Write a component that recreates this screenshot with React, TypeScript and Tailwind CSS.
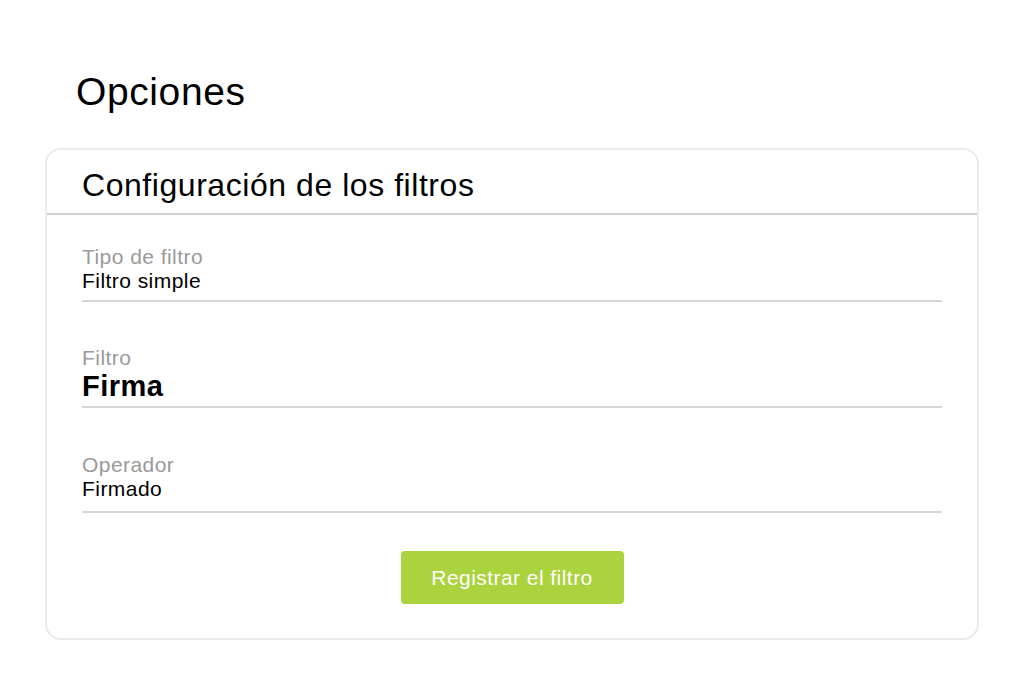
import React from "react";

const fields = [
  { label: "Tipo de filtro", value: "Filtro simple", strong: false, gap: "", pad: "pb-[7px]" },
  { label: "Filtro", value: "Firma", strong: true, gap: "mt-[44px]", pad: "pb-[4px]" },
  { label: "Operador", value: "Firmado", strong: false, gap: "mt-[45px]", pad: "pb-[10px]" },
];

const App = () => {
  return (
    <div className="w-[1024px] h-[683px] bg-white px-[45px] pt-[66px] font-['Liberation_Sans',Arial,sans-serif] text-black">
      {/* page title */}
      <h1 className="pl-[31px] text-[39px] leading-[52px] tracking-[0.6px]">Opciones</h1>

      {/* card */}
      <div className="mt-[30px] rounded-[16px] border-2 border-[#ebebeb]">
        <div className="h-[65px] px-[35px] flex items-center border-b-2 border-[#d2d2d2]">
          <h2 className="text-[32px] leading-[36px] pt-[6px] tracking-[0.55px]">Configuración de los filtros</h2>
        </div>

        <div className="px-[35px] pt-[30px] pb-[34px]">
          {fields.map((f) => (
            <div key={f.label} className={`border-b-2 border-[#d6d6d6] ${f.gap} ${f.pad}`}>
              <div className="text-[21px] leading-[24px] tracking-[0.45px] text-[#9a9a9a]">{f.label}</div>
              {f.strong ? (
                <div className="text-[29px] leading-[32px] font-bold tracking-[0.5px]">{f.value}</div>
              ) : (
                <div className="text-[21px] leading-[24px] tracking-[0.45px]">{f.value}</div>
              )}
            </div>
          ))}

          <div className="mt-[38px] flex justify-center">
            <button className="w-[223px] h-[53px] rounded-[4px] bg-[#aad33e] text-white text-[21px] tracking-[0.45px]">
              Registrar el filtro
            </button>
          </div>
        </div>
      </div>
    </div>
  );
};

export default App;
